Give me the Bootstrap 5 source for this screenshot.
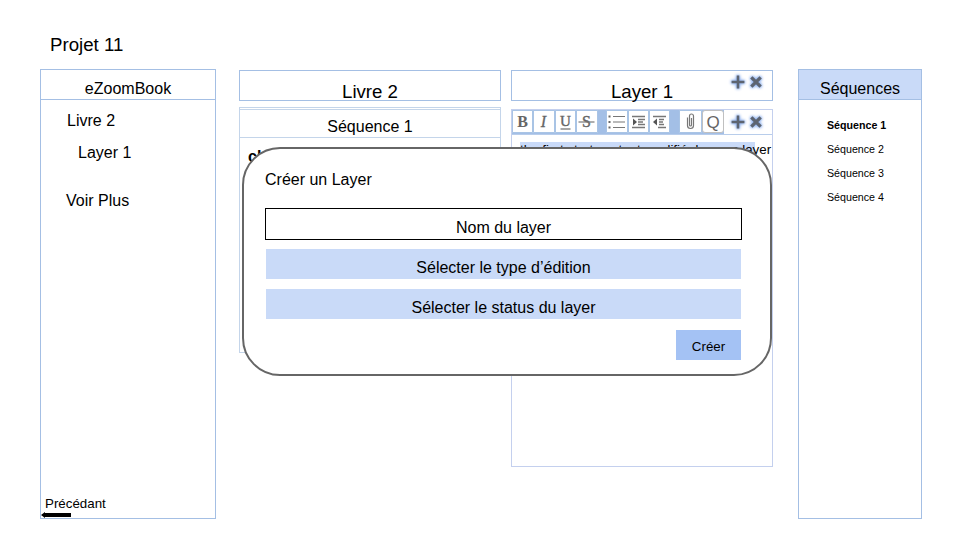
<!DOCTYPE html>
<html lang="fr">
<head>
<meta charset="utf-8">
<meta name="viewport" content="width=device-width, initial-scale=1">
<title>eZoomBook – Projet 11</title>
<link href="https://cdn.jsdelivr.net/npm/bootstrap@5.3.0/dist/css/bootstrap.min.css" rel="stylesheet">
<style>
  :root { --line: #a4bfe4; --soft: #c9daf8; --strong: #a4c2f4; }
  body { font-family: "Liberation Sans", Arial, sans-serif; font-size: 16px; line-height: 18px; color: #000; width: 960px; height: 540px; overflow: hidden; }
  .page-title { height: 69px; padding: 34px 0 0 50px; font-size: 18.67px; line-height: 21px; }
  .board { height: 450px; padding-left: 40px; }
  .panel { border: 1px solid var(--line); background: #fff; }
  .side { width: 176px; }
  .side-head { height: 30px; padding-top: 10px; border-bottom: 1px solid var(--line); }
  .side-nav { padding: 12px 0 0 26px; }
  .seq { width: 124px; margin-left: 25px; }
  .seq .side-head { background: var(--soft); }
  .seq-list { padding: 19px 0 0 28px; font-size: 10.67px; line-height: 12px; gap: 12px; }
  .back { font-size: 13.33px; line-height: 15px; padding-left: 4px; }
  .back svg { margin: 1px 0 0 -4px; }
  .book { width: 262px; margin-left: 23px; }
  .layer { width: 262px; margin-left: 10px; }
  .col-head { height: 31px; margin-top: 1px; font-size: 18.67px; line-height: 21px; padding-top: 10px; }
  .chapter { height: 246px; margin-top: 6px; border-color: #c4d5ea; }
  .chapter-head { height: 29px; margin-top: 1px; padding-top: 8px; border: solid #c4d5ea; border-width: 1px 0; }
  .chapter-text { padding: 10px 8px; }
  .editor { height: 358px; margin-top: 8px; border-color: #c4d0ee; }
  .tools { height: 25px; border-bottom: 1px solid #b8cdeb; }
  .tool-set { width: 212px; height: 24px; background: #a3bfe6; }
  .tool { width: 21.4px; height: 23px; background: #fff; border: 1px solid #a9c4e5; border-radius: 1px; padding: 0; margin-right: 0; color: #666; }
  .tool.search { border-color: #c0c0c0; border-radius: 3px; width: 22px; }
  .head-icons { top: 4px; right: 9px; }
  .tool-icons { padding-right: 9px; }
  .glow { filter: drop-shadow(0 0 1.5px #8eb1ee) drop-shadow(0 0 1px #8eb1ee); }
  .picked { margin: 7px 0 0 8px; width: 235px; background: var(--soft); white-space: nowrap; font-size: 13.33px; line-height: 16px; }
  .dialog-box { left: 242px; top: 147px; width: 530px; height: 229px; border: 2px solid #666; border-radius: 38px; background: #fff; padding: 22px 29px 0 22px; }
  .dialog-box h2 { font-size: 16px; line-height: 18px; margin: 0 0 19px -1px; font-weight: 400; }
  .field { height: 30px; padding-top: 10px; margin-bottom: 10px; background: var(--soft); }
  .field.name { height: 32px; background: #fff; border: 1px solid #000; margin: 0 -1px 9px; }
  .create { width: 65px; height: 30px; padding: 4px 0 0; margin-top: 1px; background: var(--strong); border: 0; border-radius: 0; font-size: 13.33px; color: #000; }
</style>
<script src="https://cdn.jsdelivr.net/npm/bootstrap@5.3.0/dist/js/bootstrap.bundle.min.js"></script>
</head>
<body class="bg-white position-relative">
<svg class="d-none">
  <symbol id="plus" viewBox="0 0 12 12"><path d="M6 .5v11M.5 6h11" stroke="#5d6470" stroke-width="2.2"/></symbol>
  <symbol id="cross" viewBox="0 0 12 12"><path d="M2 2l8 8M10 2l-8 8" stroke="#5d6470" stroke-width="2.8"/></symbol>
</svg>
<h1 class="page-title fw-normal m-0">Projet 11</h1>
<main class="board d-flex align-items-start">
  <aside class="side panel h-100 d-flex flex-column">
    <div class="side-head text-center">eZoomBook</div>
    <nav class="side-nav d-flex flex-column">
      <span>Livre 2</span>
      <span style="margin:14px 0 0 11px">Layer 1</span>
      <span style="margin:30px 0 0 -1px">Voir Plus</span>
    </nav>
    <div class="back mt-auto">
      <div>Précédant</div>
      <svg class="d-block" width="31" height="6" viewBox="0 0 31 6"><path d="M0 3L4 0v1h26v4H4v1z" fill="#000"/></svg>
    </div>
  </aside>

  <section class="book">
    <div class="panel col-head text-center">Livre 2</div>
    <div class="panel chapter">
      <div class="chapter-head text-center">Séquence 1</div>
      <div class="chapter-text fw-bold">chapitre</div>
    </div>
  </section>

  <section class="layer">
    <div class="panel col-head text-center position-relative">Layer 1
      <div class="head-icons position-absolute d-flex gap-1">
        <svg class="glow" width="14" height="14"><use href="#plus"/></svg>
        <svg class="glow" width="14" height="14"><use href="#cross"/></svg>
      </div>
    </div>
    <div class="panel editor">
      <div class="tools d-flex justify-content-between align-items-center">
        <div class="tool-set d-flex">
          <button class="tool"><svg class="d-block" width="19" height="21"><text x="9.5" y="16" text-anchor="middle" font-family="Liberation Serif" font-size="16" font-weight="700" fill="#666">B</text></svg></button>
          <button class="tool"><svg class="d-block" width="19" height="21"><text x="9.5" y="16" text-anchor="middle" font-family="Liberation Serif" font-size="16" font-style="italic" fill="#666" stroke="#666" stroke-width=".3">I</text></svg></button>
          <button class="tool"><svg class="d-block" width="19" height="21"><text x="9.5" y="15" text-anchor="middle" font-family="Liberation Serif" font-size="15" fill="#666" stroke="#666" stroke-width=".4">U</text><path d="M4.500 18h10" stroke="#777" stroke-width="1.300"/></svg></button>
          <button class="tool"><svg class="d-block" width="19" height="21"><text x="9.500" y="16" text-anchor="middle" font-family="Liberation Serif" font-size="16" fill="#666" stroke="#666" stroke-width=".4">S</text><path d="M1.500 11h16" stroke="#777" stroke-width="1.200"/></svg></button>
          <button class="tool ms-auto"><svg class="d-block" width="19" height="21"><path d="M6 5.500h12M6 11h12M6 16.500h12" stroke="#777" stroke-width="1.200"/><path d="M1.500 5.500h2M1.500 11h2M1.500 16.500h2" stroke="#666" stroke-width="2"/></svg></button>
          <button class="tool"><svg class="d-block" width="19" height="21"><path d="M3 5.500h13M9 8.500h7M9 11h5M9 13.500h7M3 16.500h13" stroke="#777" stroke-width="1.300"/><path d="M4 7.500l4 3.500-4 3.500z" fill="#555"/></svg></button>
          <button class="tool"><svg class="d-block" width="19" height="21"><path d="M3 5.500h13M9 8.500h5M9 11h4M9 13.500h5M8 16.500h8" stroke="#777" stroke-width="1.300"/><path d="M7 7.500L3 11l4 3.500z" fill="#555"/></svg></button>
          <button class="tool ms-auto" style="width:23px"><svg class="d-block" width="21" height="21"><path d="M7.500 6.500v8a3 3 0 0 0 6 0V5a2 2 0 0 0-4 0v9a1 1 0 0 0 2 0V7" fill="none" stroke="#777" stroke-width="1.200"/></svg></button>
          <button class="tool search"><svg class="d-block" width="20" height="21"><text x="10" y="17" text-anchor="middle" font-family="Liberation Sans" font-size="17" fill="#666">Q</text></svg></button>
        </div>
        <div class="tool-icons d-flex gap-1">
          <svg class="glow" width="14" height="14"><use href="#plus"/></svg>
          <svg class="glow" width="14" height="14"><use href="#cross"/></svg>
        </div>
      </div>
      <div class="picked">the first start content modifié dans un layer</div>
    </div>
  </section>

  <aside class="seq panel h-100">
    <div class="side-head text-center">Séquences</div>
    <div class="seq-list d-flex flex-column">
      <b>Séquence 1</b><span>Séquence 2</span><span>Séquence 3</span><span>Séquence 4</span>
    </div>
  </aside>
</main>

<div class="dialog-box position-absolute" role="dialog">
  <h2>Créer un Layer</h2>
  <div class="field name text-center">Nom du layer</div>
  <div class="field text-center">Sélecter le type d’édition</div>
  <div class="field text-center">Sélecter le status du layer</div>
  <div class="d-flex justify-content-end"><button class="create btn">Créer</button></div>
</div>
</body>
</html>
